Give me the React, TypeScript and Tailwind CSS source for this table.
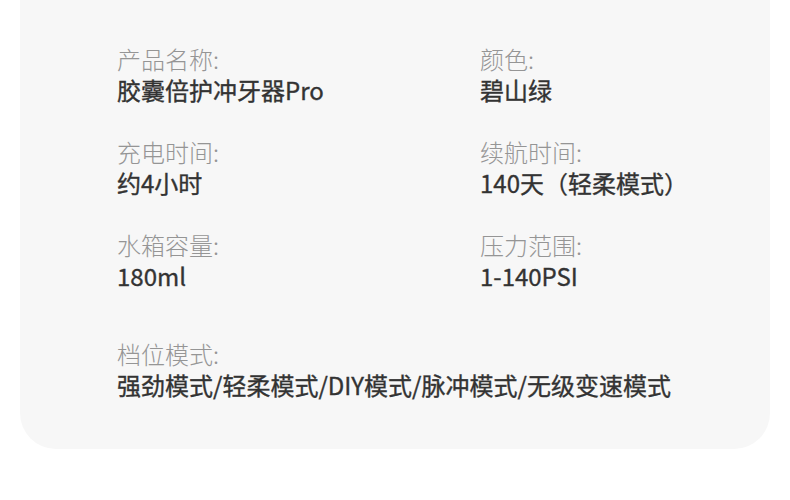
const specs = [
  { label: "产品名称:", value: "胶囊倍护冲牙器Pro" },
  { label: "颜色:", value: "碧山绿" },
  { label: "充电时间:", value: "约4小时" },
  { label: "续航时间:", value: "140天（轻柔模式）" },
  { label: "水箱容量:", value: "180ml" },
  { label: "压力范围:", value: "1-140PSI" },
];

const Item = ({ label, value }: { label: string; value: string }) => (
  <div className="flex flex-col">
    <span className="text-[24px] leading-[31px] font-light text-[#959595]">{label}</span>
    <span className="text-[24px] leading-[31px] font-normal text-[#333333] [-webkit-text-stroke:0.35px_#333333]">
      {value}
    </span>
  </div>
);

export default function App() {
  return (
    <div
      className="w-[790px] h-[500px] bg-white px-5"
      style={{ fontFamily: '"Noto Sans CJK SC", "Noto Sans", sans-serif' }}
    >
      <div className="bg-[#f7f7f7] rounded-b-[36px] pl-[97px] pt-[43px] pb-[49px]">
        <div className="grid grid-cols-[363px_1fr] gap-y-[31px]">
          {specs.map((s) => (
            <Item key={s.label} label={s.label} value={s.value} />
          ))}
        </div>
        <div className="mt-[47px]">
          <Item label="档位模式:" value="强劲模式/轻柔模式/DIY模式/脉冲模式/无级变速模式" />
        </div>
      </div>
    </div>
  );
}
